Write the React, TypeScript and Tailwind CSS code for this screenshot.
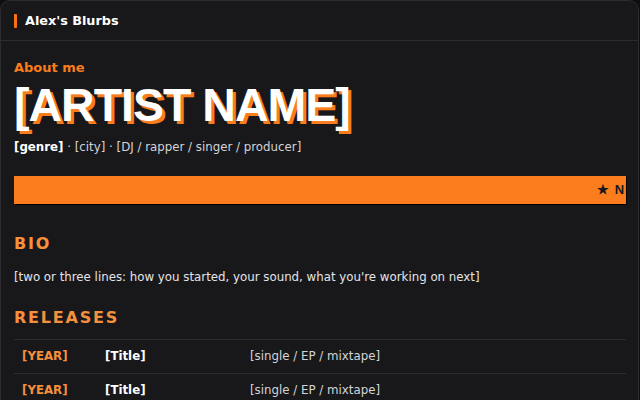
import React from "react";

const releases = [
  { year: "[YEAR]", title: "[Title]", type: "[single / EP / mixtape]" },
  { year: "[YEAR]", title: "[Title]", type: "[single / EP / mixtape]" },
];

export default function App() {
  return (
    <div className="w-[640px] h-[400px] overflow-hidden bg-[#0e0e10]" style={{ fontFamily: '"DejaVu Sans", sans-serif' }}>
      <div className="w-[639px] h-[420px] bg-[#18181b] border border-[#2c2c30] rounded-t-[10px] flex flex-col">
        <header className="h-[40px] shrink-0 border-b border-[#2c2c30] flex items-center pl-[13px] gap-[8px]">
          <span className="w-[3px] h-[14px] bg-[#f97316] rounded-[1px]" />
          <span className="text-[12.8px] font-bold text-white">Alex's Blurbs</span>
        </header>
        <main className="px-[13px] pt-[19px]">
          <div className="text-[13px] leading-[16px] font-bold text-[#f97d1c]">About me</div>
          <h1
            className="mt-[3px] text-[46.5px] leading-[52px] font-bold text-white tracking-[-1px]"
            style={{ fontFamily: '"Liberation Sans", Arial, sans-serif', textShadow: "3px 3px 0 #f97d1c" }}
          >
            [ARTIST NAME]
          </h1>
          <div className="mt-[9px] text-[11.8px] leading-[15px] text-[#d4d4d8]">
            <span className="font-bold text-white">[genre]</span> · [city] · [DJ / rapper / singer / producer]
          </div>
          <div className="mt-[21px] h-[28px] w-[612px] bg-[#fb7d1e] shadow-[1px_1px_0_#000] overflow-hidden flex items-center justify-end">
            <span
              className="whitespace-nowrap text-[13px] font-bold text-[#18181b] tracking-[1px] translate-x-[22px]"
              style={{ fontFamily: '"Liberation Sans", Arial, sans-serif' }}
            >
              ★&nbsp;NEW
            </span>
          </div>
          <h2 className="mt-[30px] text-[16px] leading-[19px] font-bold text-[#f5903c] tracking-[1.8px]">BIO</h2>
          <p className="mt-[17px] text-[11.8px] leading-[15px] text-[#e4e4e7]">
            [two or three lines: how you started, your sound, what you're working on next]
          </p>
          <h2 className="mt-[23px] text-[16px] leading-[19px] font-bold text-[#f5903c] tracking-[1.8px]">RELEASES</h2>
          <div className="mt-[12px] w-[612px]">
            {releases.map((r, i) => (
              <div key={i} className="h-[34px] border-t border-[#2c2c30] flex items-center text-[11.8px]">
                <span className="w-[91px] pl-[8px] font-bold text-[#f5903c]">{r.year}</span>
                <span className="w-[145px] font-bold text-white">{r.title}</span>
                <span className="text-[#d4d4d8]">{r.type}</span>
              </div>
            ))}
          </div>
        </main>
      </div>
    </div>
  );
}
